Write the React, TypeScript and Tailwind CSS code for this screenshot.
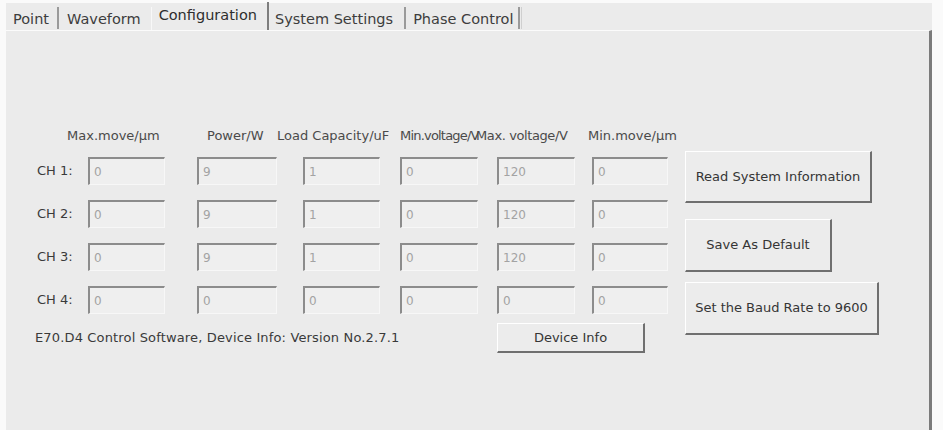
// Configuration tab of the E70.D4 control software, drawn as a classic Windows dialog.

const channels = [
  { label: "CH 1:", values: ["0", "9", "1", "0", "120", "0"] },
  { label: "CH 2:", values: ["0", "9", "1", "0", "120", "0"] },
  { label: "CH 3:", values: ["0", "9", "1", "0", "120", "0"] },
  { label: "CH 4:", values: ["0", "0", "0", "0", "0", "0"] },
];

// Each input column: left gap and width, matching the dialog's uneven grid.
const columns = [
  "ml-0 w-[77px]",
  "ml-[32px] w-[80px]",
  "ml-[26px] w-[77px]",
  "ml-[20px] w-[78px]",
  "ml-[19px] w-[78px]",
  "ml-[17px] w-[76px]",
];

const headers = [
  { text: "Max.move/μm", cls: "w-[140px]" },
  { text: "Power/W", cls: "w-[70px]" },
  { text: "Load Capacity/uF", cls: "w-[123px]" },
  { text: "Min.voltage/V", cls: "w-[76px] tracking-[-0.8px]" },
  { text: "Max. voltage/V", cls: "w-[112px] tracking-[-0.4px]" },
  { text: "Min.move/μm", cls: "w-[90px]" },
];

function Sep({ tall }: { tall?: boolean }) {
  return (
    <span
      className={
        tall
          ? "self-stretch mt-[-1px] w-[2px] bg-[#7d7d7d]"
          : "mt-[4px] h-[22px] w-[2px] self-start bg-[#9a9a9a]"
      }
    />
  );
}

function Field({ value, cls }: { value: string; cls: string }) {
  return (
    <div
      className={`${cls} h-[28px] flex items-center pl-[4px] border-t-2 border-l-2 border-r border-b border-t-[#8c8c8c] border-l-[#8c8c8c] border-r-[#f7f7f7] border-b-[#f7f7f7] bg-[#efefef] text-[12px] text-[#a3a3a3]`}
    >
      {value}
    </div>
  );
}

function WinButton({ children, cls }: { children: React.ReactNode; cls: string }) {
  return (
    <button
      type="button"
      className={`${cls} flex items-center justify-center border-t border-l border-r-2 border-b-2 border-t-white border-l-white border-r-[#6f6f6f] border-b-[#6f6f6f] bg-[#ececec] text-[13px] text-[#353535]`}
    >
      {children}
    </button>
  );
}

export default function App() {
  return (
    <div className="w-[943px] h-[430px] overflow-hidden bg-[#fafafa] pl-[6px] pt-[3px] font-['DejaVu_Sans',sans-serif] text-[#383838]">
      <div className="w-[926px] h-full flex flex-col bg-[#ebebeb]">
        {/* Tab strip */}
        <div className="h-[27px] flex pl-[7px] text-[14.5px] leading-[16px] text-[#3d3d3d]">
          <span className="mt-[8px]">Point</span>
          <span className="ml-[8px] flex"><Sep /></span>
          <span className="ml-[8px] mt-[8px]">Waveform</span>
          <span className="ml-[10px] pl-[7px] mt-[4px] border-l border-l-[#f8f8f8] self-stretch text-[#2e2e2e]">
            <span className="block">Configuration</span>
          </span>
          <span className="ml-[10px] flex"><Sep tall /></span>
          <span className="ml-[6px] mt-[8px]">System Settings</span>
          <span className="ml-[11px] flex"><Sep /></span>
          <span className="ml-[7px] mt-[8px]">Phase Control</span>
          <span className="ml-[5px] flex gap-[1px]">
            <Sep />
            <span className="mt-[4px] h-[22px] w-[1px] bg-[#cfcfcf]" />
          </span>
        </div>

        {/* Page body */}
        <div className="flex-1 flex border-t border-t-[#fbfbfb] border-r-[3px] border-r-[#7b7b7b] pl-[31px]">
          <div className="w-[648px] flex flex-col pt-[97px]">
            <div className="h-[16px] flex text-[13px] leading-[16px] text-[#4a4a4a] whitespace-nowrap">
              <span className="w-[30px]" />
              {headers.map((h) => (
                <span key={h.text} className={h.cls}>
                  {h.text}
                </span>
              ))}
            </div>

            <div className="mt-[13px] flex flex-col gap-[15px]">
              {channels.map((ch) => (
                <div key={ch.label} className="flex items-center h-[28px]">
                  <span className="w-[51px] text-[13px] text-[#3a3a3a]">{ch.label}</span>
                  {ch.values.map((v, i) => (
                    <Field key={i} value={v} cls={columns[i]} />
                  ))}
                </div>
              ))}
            </div>

            <div className="mt-[9px] h-[30px] flex items-center -ml-[2px]">
              <span className="w-[462px] text-[13px] tracking-[0.15px] text-[#3a3a3a] whitespace-nowrap">
                E70.D4 Control Software, Device Info: Version No.2.7.1
              </span>
              <WinButton cls="w-[148px] h-[30px]">Device Info</WinButton>
            </div>
          </div>

          <div className="flex flex-col items-start pt-[120px]">
            <WinButton cls="w-[187px] h-[52px]">Read System Information</WinButton>
            <WinButton cls="mt-[16px] w-[147px] h-[53px]">Save As Default</WinButton>
            <WinButton cls="mt-[10px] w-[194px] h-[53px]">Set the Baud Rate to 9600</WinButton>
          </div>
        </div>
      </div>
    </div>
  );
}
